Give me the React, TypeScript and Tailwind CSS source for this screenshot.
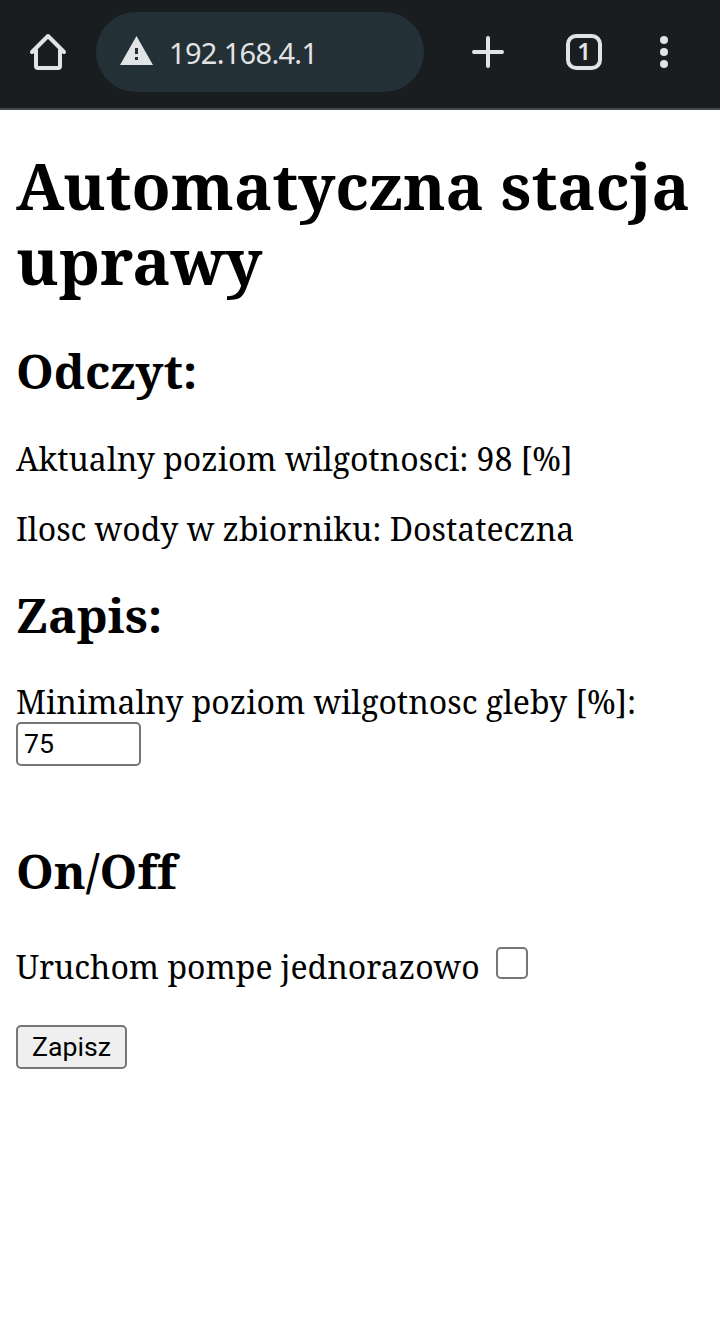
import { useState } from "react";

const serif = "font-['Noto_Serif','DejaVu_Serif_Condensed','DejaVu_Serif',serif]";

function BrowserBar() {
  return (
    <header className="flex h-[110px] items-start border-b-2 border-[#474747] bg-[#1a1d1f] pt-3 text-[#e1e3e5]">
      <button aria-label="Home" className="flex h-20 w-24 items-center justify-center">
        <svg width="40" height="40" viewBox="0 0 40 40" fill="none" stroke="currentColor" strokeWidth="4" strokeLinecap="round" strokeLinejoin="round">
          <path d="M4 20 20 4 36 20M8 18V34Q8 36 10 36H30Q32 36 32 34V18" />
        </svg>
      </button>
      <div className="flex h-20 w-[328px] items-center rounded-full bg-[#233036] pl-6">
        <svg width="33" height="29" viewBox="0 0 33 29" fill="currentColor" className="mb-[3px]">
          <path fillRule="evenodd" d="M16.5 0 33 29H0ZM15 12V18H18V12ZM15 21V24H18V21Z" />
        </svg>
        <span className="ml-4 pt-px font-['Noto_Sans',sans-serif] text-[29px] leading-10 tracking-[-0.7px]">192.168.4.1</span>
      </div>
      <button aria-label="New tab" className="ml-4 flex h-20 w-24 items-center justify-center">
        <svg width="32" height="32" viewBox="0 0 32 32" stroke="currentColor" strokeWidth="4" strokeLinecap="round">
          <path d="M16 2V30M2 16H30" />
        </svg>
      </button>
      <button aria-label="Tabs" className="flex h-20 w-24 items-center justify-center">
        <span className="flex size-9 items-center justify-center rounded-[10px] border-4 border-current pb-0.5 font-['Noto_Sans',sans-serif] text-[24px] leading-none font-semibold">1</span>
      </button>
      <button aria-label="Menu" className="flex h-20 w-16 items-center justify-center">
        <svg width="8" height="32" viewBox="0 0 8 32" fill="currentColor">
          <circle cx="4" cy="4" r="4" />
          <circle cx="4" cy="16" r="4" />
          <circle cx="4" cy="28" r="4" />
        </svg>
      </button>
    </header>
  );
}

export default function App() {
  const [level, setLevel] = useState("75");
  const [pump, setPump] = useState(false);

  return (
    <div className="flex h-[1340px] w-[720px] flex-col overflow-hidden bg-white text-black">
      <BrowserBar />
      <main className={`flex flex-col items-start px-4 whitespace-nowrap ${serif}`}>
        <h1 className="mt-[38px] text-[64px] leading-[75px] font-bold">
          Automatyczna stacja
          <br />
          uprawy
        </h1>
        <h2 className="mt-[41px] text-[48px] leading-[64px] font-bold">Odczyt:</h2>
        <p className="mt-[37px] text-[32px] leading-[38px]">Aktualny poziom wilgotnosci: 98 [%]</p>
        <p className="mt-8 text-[32px] leading-[38px]">Ilosc wody w zbiorniku: Dostateczna</p>
        <h2 className="mt-[35px] text-[48px] leading-[64px] font-bold">Zapis:</h2>
        <label htmlFor="level" className="mt-9 text-[32px] leading-[38px]">Minimalny poziom wilgotnosc gleby [%]:</label>
        <input
          id="level"
          value={level}
          onChange={(e) => setLevel(e.target.value)}
          className="mt-px h-11 w-[125px] rounded-[5px] border-2 border-[#767676] bg-white px-1.5 font-[Roboto,sans-serif] text-[26.667px]"
        />
        <h2 className="mt-[73px] text-[48px] leading-[64px] font-bold [font-variant-ligatures:none]">On/Off</h2>
        <div className="mt-[45px] flex h-[38px] items-start">
          <label htmlFor="pump" className="w-[480px] text-[32px] leading-[38px]">Uruchom pompe jednorazowo</label>
          <input
            id="pump"
            type="checkbox"
            checked={pump}
            onChange={(e) => setPump(e.target.checked)}
            className="-mt-px size-8 appearance-none rounded-[5px] border-2 border-[#767676] bg-white checked:bg-[#0075ff]"
          />
        </div>
        <button className="mt-[39px] h-11 w-[111px] rounded-[5px] border-2 border-[#767676] bg-[#efefef] font-[Roboto,sans-serif] text-[26.667px]">
          Zapisz
        </button>
      </main>
    </div>
  );
}
